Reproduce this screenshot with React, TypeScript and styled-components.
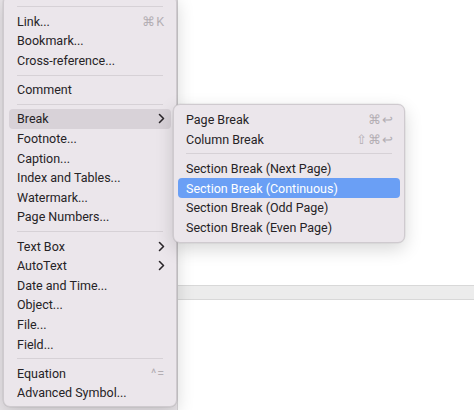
import React from "react";
import styled, { createGlobalStyle } from "styled-components";

const GlobalStyle = createGlobalStyle`
  html, body {
    margin: 0;
    padding: 0;
    background: #ffffff;
  }
  body {
    font-family: Roboto, "Liberation Sans", sans-serif;
    -webkit-font-smoothing: antialiased;
  }
`;

type Entry =
  | { kind: "item"; label: string; shortcut?: string; submenu?: boolean; state?: "hover" | "active" }
  | { kind: "sep" };

const mainItems: Entry[] = [
  { kind: "sep" },
  { kind: "item", label: "Link...", shortcut: "⌘K" },
  { kind: "item", label: "Bookmark..." },
  { kind: "item", label: "Cross-reference..." },
  { kind: "sep" },
  { kind: "item", label: "Comment" },
  { kind: "sep" },
  { kind: "item", label: "Break", submenu: true, state: "hover" },
  { kind: "item", label: "Footnote..." },
  { kind: "item", label: "Caption..." },
  { kind: "item", label: "Index and Tables..." },
  { kind: "item", label: "Watermark..." },
  { kind: "item", label: "Page Numbers..." },
  { kind: "sep" },
  { kind: "item", label: "Text Box", submenu: true },
  { kind: "item", label: "AutoText", submenu: true },
  { kind: "item", label: "Date and Time..." },
  { kind: "item", label: "Object..." },
  { kind: "item", label: "File..." },
  { kind: "item", label: "Field..." },
  { kind: "sep" },
  { kind: "item", label: "Equation", shortcut: "^=" },
  { kind: "item", label: "Advanced Symbol..." },
];

const breakItems: Entry[] = [
  { kind: "item", label: "Page Break", shortcut: "⌘↩" },
  { kind: "item", label: "Column Break", shortcut: "⇧⌘↩" },
  { kind: "sep" },
  { kind: "item", label: "Section Break (Next Page)" },
  { kind: "item", label: "Section Break (Continuous)", state: "active" },
  { kind: "item", label: "Section Break (Odd Page)" },
  { kind: "item", label: "Section Break (Even Page)" },
];

function Chevron() {
  return (
    <svg width="7" height="11" viewBox="0 0 7 11">
      <path d="M1.5 1.5 L5.5 5.5 L1.5 9.5" fill="none" stroke="#2a262a" strokeWidth="1.6" strokeLinecap="round" strokeLinejoin="round" />
    </svg>
  );
}

function MenuList({ items }: { items: Entry[] }) {
  return (
    <>
      {items.map((e, i) =>
        e.kind === "sep" ? (
          <Separator key={i} />
        ) : (
          <Row key={i} $state={e.state}>
            <span>{e.label}</span>
            {e.shortcut && <Shortcut>{e.shortcut}</Shortcut>}
            {e.submenu && <Chevron />}
          </Row>
        )
      )}
    </>
  );
}

export default function App() {
  return (
    <>
      <GlobalStyle />
      <Page>
        <Canvas>
          <Gutter />
          <Document>
            <Sheet $h={285} />
            <Gap />
            <Sheet $h={110} />
          </Document>
        </Canvas>
        <MainMenu>
          <MenuList items={mainItems} />
        </MainMenu>
        <SubMenu>
          <MenuList items={breakItems} />
        </SubMenu>
      </Page>
    </>
  );
}

const Page = styled.div`
  position: relative;
  width: 474px;
  height: 410px;
  overflow: hidden;
  background: #ffffff;
`;

const Canvas = styled.div`
  display: flex;
  height: 100%;
`;

const Gutter = styled.div`
  width: 177px;
  background: #e9e5e9;
  border-right: 1px solid #d6d3d6;
`;

const Document = styled.div`
  flex: 1;
  display: flex;
  flex-direction: column;
`;

const Sheet = styled.div<{ $h: number }>`
  height: ${(p) => p.$h}px;
  background: #ffffff;
  flex-shrink: 0;
`;

const Gap = styled.div`
  height: 15px;
  background: #ececec;
  border-top: 1px solid #d8d8d8;
  border-bottom: 1px solid #d8d8d8;
`;

const MenuBase = styled.div`
  position: absolute;
  box-sizing: border-box;
  background: #ebe6eb;
  border: 1px solid #cfcacf;
  border-radius: 7px;
  padding: 5px 5px;
  box-shadow: 0 6px 18px rgba(0, 0, 0, 0.16), 0 0 0 0.5px rgba(0, 0, 0, 0.08);
  font-size: 12.5px;
  color: #262326;
`;

const MainMenu = styled(MenuBase)`
  left: 3px;
  top: -5px;
  width: 174px;
  height: 412px;
  padding-top: 6px;
`;

const SubMenu = styled(MenuBase)`
  left: 173px;
  top: 104px;
  width: 232px;
  padding: 5px 4px;
`;

const Row = styled.div<{ $state?: "hover" | "active" }>`
  display: flex;
  align-items: center;
  justify-content: space-between;
  height: 19.6px;
  padding: 0 6px 0 8px;
  border-radius: 4px;
  white-space: nowrap;
  background: ${(p) =>
    p.$state === "active" ? "#6a9ff5" : p.$state === "hover" ? "#d8d2d8" : "transparent"};
  color: ${(p) => (p.$state === "active" ? "#ffffff" : "inherit")};
`;

const Shortcut = styled.span`
  color: #b3aeb3;
  letter-spacing: 1px;
`;

const Separator = styled.div`
  height: 1px;
  background: #d6d1d6;
  margin: 4.3px 8px;
`;
